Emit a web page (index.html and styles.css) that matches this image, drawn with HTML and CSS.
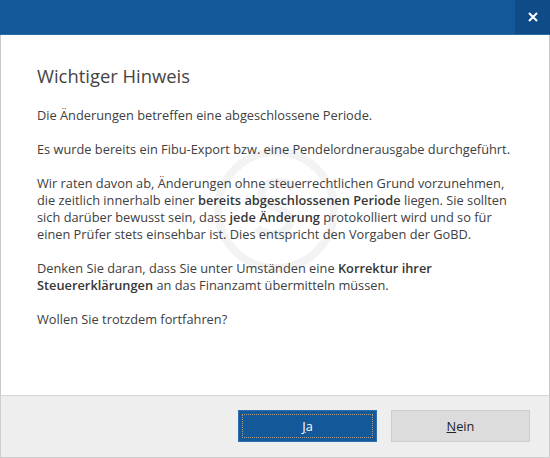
FILE: index.html
```html
<!DOCTYPE html>
<html lang="de">
<head>
	<meta charset="UTF-8">
	<title>Wichtiger Hinweis</title>
	<link rel="stylesheet" href="styles.css">
</head>
<body>
	<div class="dialog">
		<div class="titlebar">
			<button class="close" type="button" title="Schließen">
				<svg width="10" height="10" viewBox="0 0 10 10">
					<path d="M1 1L9 9M9 1L1 9" stroke="#ffffff" stroke-width="2"/>
				</svg>
			</button>
		</div>

		<div class="content">
			<!-- Wasserzeichen hinter dem Text -->
			<svg class="watermark" width="130" height="130" viewBox="0 0 130 130">
				<circle cx="65" cy="65" r="58" fill="none" stroke="#f3f3f3" stroke-width="8"/>
				<path d="M82 42c-6-6-24-8-30 2s6 16 14 19s18 10 10 20s-24 6-30 0" fill="none" stroke="#f3f3f3" stroke-width="8"/>
			</svg>

			<h1>Wichtiger Hinweis</h1>
			<p>Die Änderungen betreffen eine abgeschlossene Periode.</p>
			<p>Es wurde bereits ein Fibu-Export bzw. eine Pendelordnerausgabe durchgeführt.</p>
			<p>
				Wir raten davon ab, Änderungen ohne steuerrechtlichen Grund vorzunehmen,<br>
				die zeitlich innerhalb einer <b>bereits abgeschlossenen Periode</b> liegen. Sie sollten<br>
				sich darüber bewusst sein, dass <b>jede Änderung</b> protokolliert wird und so für<br>
				einen Prüfer stets einsehbar ist. Dies entspricht den Vorgaben der GoBD.
			</p>
			<p>
				Denken Sie daran, dass Sie unter Umständen eine <b>Korrektur ihrer<br>
				Steuererklärungen</b> an das Finanzamt übermitteln müssen.
			</p>
			<p>Wollen Sie trotzdem fortfahren?</p>
		</div>

		<div class="footer">
			<button class="btn btn-primary" type="button"><span class="focus"><u>J</u>a</span></button>
			<button class="btn" type="button"><u>N</u>ein</button>
		</div>
	</div>
</body>
</html>
```

FILE: styles.css
```css
html, body {
	margin: 0;
	padding: 0;
}

body {
	font-family: "Open Sans", "Noto Sans", sans-serif;
	color: #404040;
	background-color: #ffffff;
}

.dialog {
	width: 550px;
	height: 458px;
	display: flex;
	flex-direction: column;
}

.titlebar {
	height: 35px;
	background-color: #135899;
	display: flex;
	justify-content: flex-end;
	border-bottom: 1px solid #2a6aa6;
	box-sizing: border-box;
}

.close {
	width: 35px;
	height: 34px;
	border: none;
	padding: 0;
	background-color: #0f4c87;
	display: flex;
	align-items: center;
	justify-content: center;
}

.content {
	flex: 1;
	position: relative;
	padding: 28px 20px 0 36px;
	border-left: 1px solid #c9c9c9;
	border-right: 1px solid #c9c9c9;
	font-size: 12.8px;
	line-height: 17px;
}

.watermark {
	position: absolute;
	left: 210px;
	top: 110px;
}

.content h1 {
	position: relative;
	margin: 0 0 18px 0;
	font-size: 18.4px;
	font-weight: normal;
	line-height: 26px;
	color: #444444;
}

.content p {
	position: relative;
	margin: 0 0 17px 0;
}

.content b {
	font-weight: 600;
	color: #363636;
}

.footer {
	height: 63px;
	box-sizing: border-box;
	background-color: #eeeeee;
	border: 1px solid #cfcfcf;
	border-top-color: #d6d6d6;
	display: flex;
	justify-content: flex-end;
	align-items: flex-start;
	gap: 14px;
	padding: 14px 19px 0 0;
}

.btn {
	width: 139px;
	height: 32px;
	border: 1px solid #cdcdcd;
	background-color: #dcdcdc;
	color: #222222;
	font-family: "Open Sans", "Noto Sans", sans-serif;
	font-size: 12.8px;
	padding: 0;
}

.btn-primary {
	background-color: #135899;
	border-color: #2f6cb0;
	color: #ffffff;
	padding: 3px;
}

.btn-primary .focus {
	display: flex;
	align-items: center;
	justify-content: center;
	height: 100%;
	box-sizing: border-box;
	border: 1px dotted #b09a80;
}
```
